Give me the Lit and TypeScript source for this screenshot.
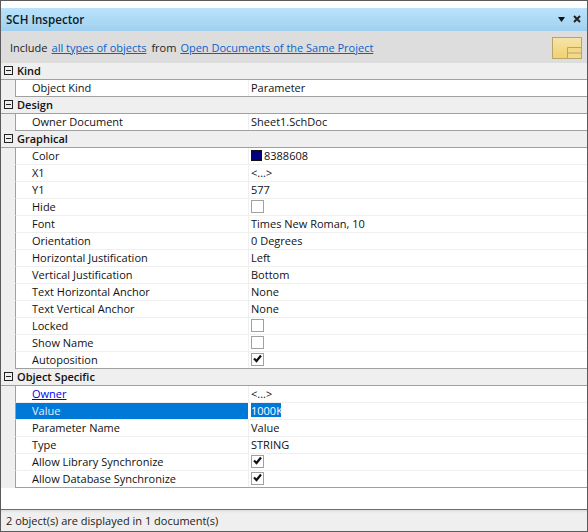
import { LitElement, html, css, nothing } from 'lit'
import { customElement } from 'lit/decorators.js'

type Row = {
  label: string
  value?: string
  check?: boolean
  swatch?: boolean
  link?: boolean
  selected?: boolean
}

const sections: { title: string; rows: Row[] }[] = [
  { title: 'Kind', rows: [{ label: 'Object Kind', value: 'Parameter' }] },
  { title: 'Design', rows: [{ label: 'Owner Document', value: 'Sheet1.SchDoc' }] },
  {
    title: 'Graphical',
    rows: [
      { label: 'Color', value: '8388608', swatch: true },
      { label: 'X1', value: '<...>' },
      { label: 'Y1', value: '577' },
      { label: 'Hide', check: false },
      { label: 'Font', value: 'Times New Roman, 10' },
      { label: 'Orientation', value: '0 Degrees' },
      { label: 'Horizontal Justification', value: 'Left' },
      { label: 'Vertical Justification', value: 'Bottom' },
      { label: 'Text Horizontal Anchor', value: 'None' },
      { label: 'Text Vertical Anchor', value: 'None' },
      { label: 'Locked', check: false },
      { label: 'Show Name', check: false },
      { label: 'Autoposition', check: true }
    ]
  },
  {
    title: 'Object Specific',
    rows: [
      { label: 'Owner', value: '<...>', link: true },
      { label: 'Value', value: '1000K', selected: true },
      { label: 'Parameter Name', value: 'Value' },
      { label: 'Type', value: 'STRING' },
      { label: 'Allow Library Synchronize', check: true },
      { label: 'Allow Database Synchronize', check: true }
    ]
  }
]

@customElement('app-root')
export class AppRoot extends LitElement {
  static styles = css`
    :host {
      display: block;
      width: 588px;
      height: 532px;
      font-family: 'Open Sans', 'Noto Sans', sans-serif;
      font-size: 11px;
      color: #111;
    }

    .panel {
      box-sizing: border-box;
      height: 532px;
      display: flex;
      flex-direction: column;
      background: #fff;
      border: 1px solid #5a5a5a;
      padding-top: 7px;
    }

    .title {
      box-sizing: border-box;
      height: 23px;
      flex: none;
      display: flex;
      align-items: center;
      padding: 0 6px 1px 5px;
      background: linear-gradient(#bae3fc, #a0d0ef);
      font-size: 11.6px;
      font-weight: 600;
      color: #0c1a26;
    }

    .title span {
      flex: 1;
    }

    .title svg {
      display: block;
    }

    .title .menu {
      margin-right: 8px;
    }

    .toolbar {
      height: 32px;
      flex: none;
      display: flex;
      align-items: center;
      gap: 4px;
      padding: 0 5px 0 9px;
      background: #dddddd;
      white-space: nowrap;
      color: #222;
    }

    .toolbar a {
      color: #0a62c9;
      text-decoration: underline;
    }

    .toolbar .from {
      margin-left: 1px;
    }

    .toolbar .gap {
      flex: 1;
    }

    .tree {
      flex: 1;
    }

    .head {
      box-sizing: border-box;
      height: 17px;
      display: flex;
      align-items: center;
      padding-bottom: 1px;
      background: #efefef;
      border-bottom: 1px solid #a0a0a0;
      font-weight: 600;
      color: #111;
    }

    .expander {
      box-sizing: border-box;
      width: 9px;
      height: 9px;
      margin: 0 4px 0 3px;
      border: 1px solid #222;
      display: flex;
      align-items: center;
      justify-content: center;
    }

    .expander::after {
      content: '';
      width: 5px;
      height: 1px;
      background: #222;
    }

    .rows {
      border-left: 14px solid #efefef;
    }

    .row {
      box-sizing: border-box;
      height: 17px;
      display: flex;
      border-left: 1px solid #a0a0a0;
      border-bottom: 1px solid #efefef;
      background: #fff;
    }

    .row.last {
      border-bottom-color: #a0a0a0;
    }

    .name {
      width: 233px;
      flex: none;
      box-sizing: border-box;
      padding-left: 16px;
      line-height: 16px;
      border-right: 1px solid #efefef;
      white-space: nowrap;
    }

    .name a {
      color: #0000ee;
      text-decoration: underline;
    }

    .row.selected .name {
      background: #0078d7;
      color: #e4effa;
      border-right-color: #fff;
    }

    .value {
      flex: 1;
      padding-left: 2px;
      line-height: 16px;
      display: flex;
      align-items: flex-start;
      white-space: nowrap;
    }

    .editing {
      background: #0078d7;
      color: #fff;
      width: 30px;
      height: 14px;
      line-height: 15px;
    }

    .swatch {
      box-sizing: border-box;
      width: 11px;
      height: 11px;
      margin: 2px 2px 0 0;
      background: #000080;
      border: 1px solid #111;
    }

    .check {
      box-sizing: border-box;
      width: 13px;
      height: 13px;
      margin-top: 1px;
      border: 1px solid #a0a0a0;
      background: #fff;
    }

    .check svg {
      display: block;
    }

    .note {
      flex: none;
      position: relative;
      box-sizing: border-box;
      width: 30px;
      height: 22px;
      margin-top: 1px;
      border: 1px solid #b8a56c;
      background: linear-gradient(#f6e3a8, #f1d26f);
    }

    .note svg {
      position: absolute;
      right: -1px;
      bottom: -1px;
      display: block;
    }

    .status {
      height: 21px;
      flex: none;
      display: flex;
      align-items: center;
      padding-left: 5px;
      background: linear-gradient(#dcdcdc, #efefef 3px);
      border-top: 1px solid #6e6e6e;
      color: #222;
    }
  `

  renderValue (row: Row) {
    if (row.check !== undefined) {
      return html`<div class="check">
        ${row.check
          ? html`<svg width="11" height="11" viewBox="0 0 11 11"><path d="M2 4.5l2.5 2.5L9 1.5" fill="none" stroke="#111" stroke-width="2.2"/></svg>`
          : nothing}
      </div>`
    }
    if (row.selected) return html`<div class="editing">${row.value}</div>`
    return html`${row.swatch ? html`<div class="swatch"></div>` : nothing}${row.value}`
  }

  render () {
    return html`
      <div class="panel">
        <div class="title">
          <span>SCH Inspector</span>
          <svg class="menu" width="7" height="5" viewBox="0 0 7 5"><path d="M0 0h7L3.5 5z" fill="#111"/></svg>
          <svg width="8" height="8" viewBox="0 0 8 8"><path d="M1 1l6 6M7 1L1 7" stroke="#222" stroke-width="2"/></svg>
        </div>
        <div class="toolbar">
          <span>Include</span>
          <a>all types of objects</a>
          <span class="from">from</span>
          <a>Open Documents of the Same Project</a>
          <div class="gap"></div>
          <div class="note">
            <svg width="15" height="12" viewBox="0 0 15 12">
              <path d="M.5.5h14v11H.5zM.5 6h14" fill="#f3d987" stroke="#b8a56c"/>
            </svg>
          </div>
        </div>
        <div class="tree">
          ${sections.map(section => html`
            <div class="head"><div class="expander"></div>${section.title}</div>
            <div class="rows">
              ${section.rows.map((row, i) => html`
                <div class="row ${row.selected ? 'selected' : ''} ${i === section.rows.length - 1 ? 'last' : ''}">
                  <div class="name">${row.link ? html`<a>${row.label}</a>` : row.label}</div>
                  <div class="value">${this.renderValue(row)}</div>
                </div>
              `)}
            </div>
          `)}
        </div>
        <div class="status">2 object(s) are displayed in 1 document(s)</div>
      </div>
    `
  }
}
